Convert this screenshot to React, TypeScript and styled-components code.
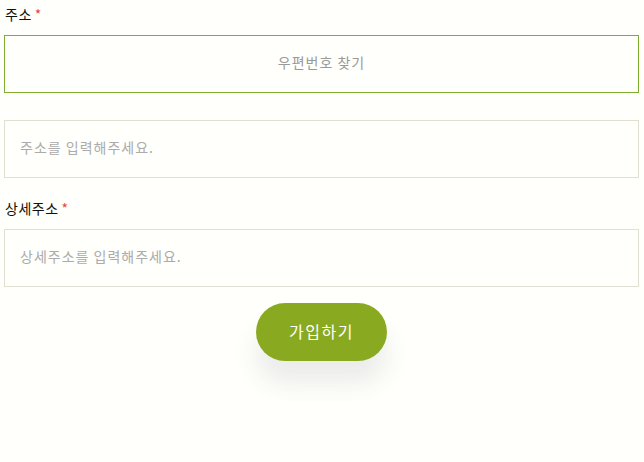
import styled, { createGlobalStyle } from 'styled-components';

const GlobalStyle = createGlobalStyle`
  html, body {
    margin: 0;
    padding: 0;
    background: #fffffb;
  }
  body {
    font-family: "Noto Sans CJK KR", "Noto Sans", sans-serif;
  }
`;

const Form = styled.form`
  display: flex;
  flex-direction: column;
  padding: 4px 5px 40px 4px;
`;

const Label = styled.label<{ $first?: boolean }>`
  font-size: 14px;
  line-height: 20px;
  letter-spacing: 0.5px;
  color: #111;
  margin-top: ${({ $first }) => ($first ? '0' : '20px')};
  margin-bottom: 11px;
  padding-left: 1px;
`;

const Required = styled.span`
  color: #e8473b;
  margin-left: 3px;
`;

const PostcodeButton = styled.button`
  height: 58px;
  width: 100%;
  box-sizing: border-box;
  border: 1px solid #7fae2e;
  background: transparent;
  padding: 0 0 4px;
  font-family: inherit;
  font-size: 14px;
  letter-spacing: 1px;
  color: #9a9a9a;
  cursor: pointer;
  margin-bottom: 27px;
`;

const TextInput = styled.input`
  height: 58px;
  width: 100%;
  box-sizing: border-box;
  border: 1px solid #e0dfd2;
  background: transparent;
  padding: 0 15px 5px;
  font-family: inherit;
  font-size: 14px;
  letter-spacing: 1px;
  color: #333;
  outline: none;

  &::placeholder {
    color: #ababab;
  }
`;

const SubmitButton = styled.button`
  align-self: center;
  margin-top: 16px;
  width: 131px;
  height: 58px;
  border: none;
  border-radius: 29px;
  background: #89aa20;
  padding: 0 0 2px;
  color: #fff;
  font-family: inherit;
  font-size: 16px;
  letter-spacing: 1.5px;
  cursor: pointer;
  box-shadow: 0 22px 26px rgba(60, 60, 90, 0.1);
`;

export default function App() {
  return (
    <>
      <GlobalStyle />
      <Form onSubmit={e => e.preventDefault()}>
        <Label $first>
          주소<Required>*</Required>
        </Label>
        <PostcodeButton type="button">우편번호 찾기</PostcodeButton>
        <TextInput type="text" placeholder="주소를 입력해주세요." />

        <Label>
          상세주소<Required>*</Required>
        </Label>
        <TextInput type="text" placeholder="상세주소를 입력해주세요." />

        <SubmitButton type="submit">가입하기</SubmitButton>
      </Form>
    </>
  );
}
